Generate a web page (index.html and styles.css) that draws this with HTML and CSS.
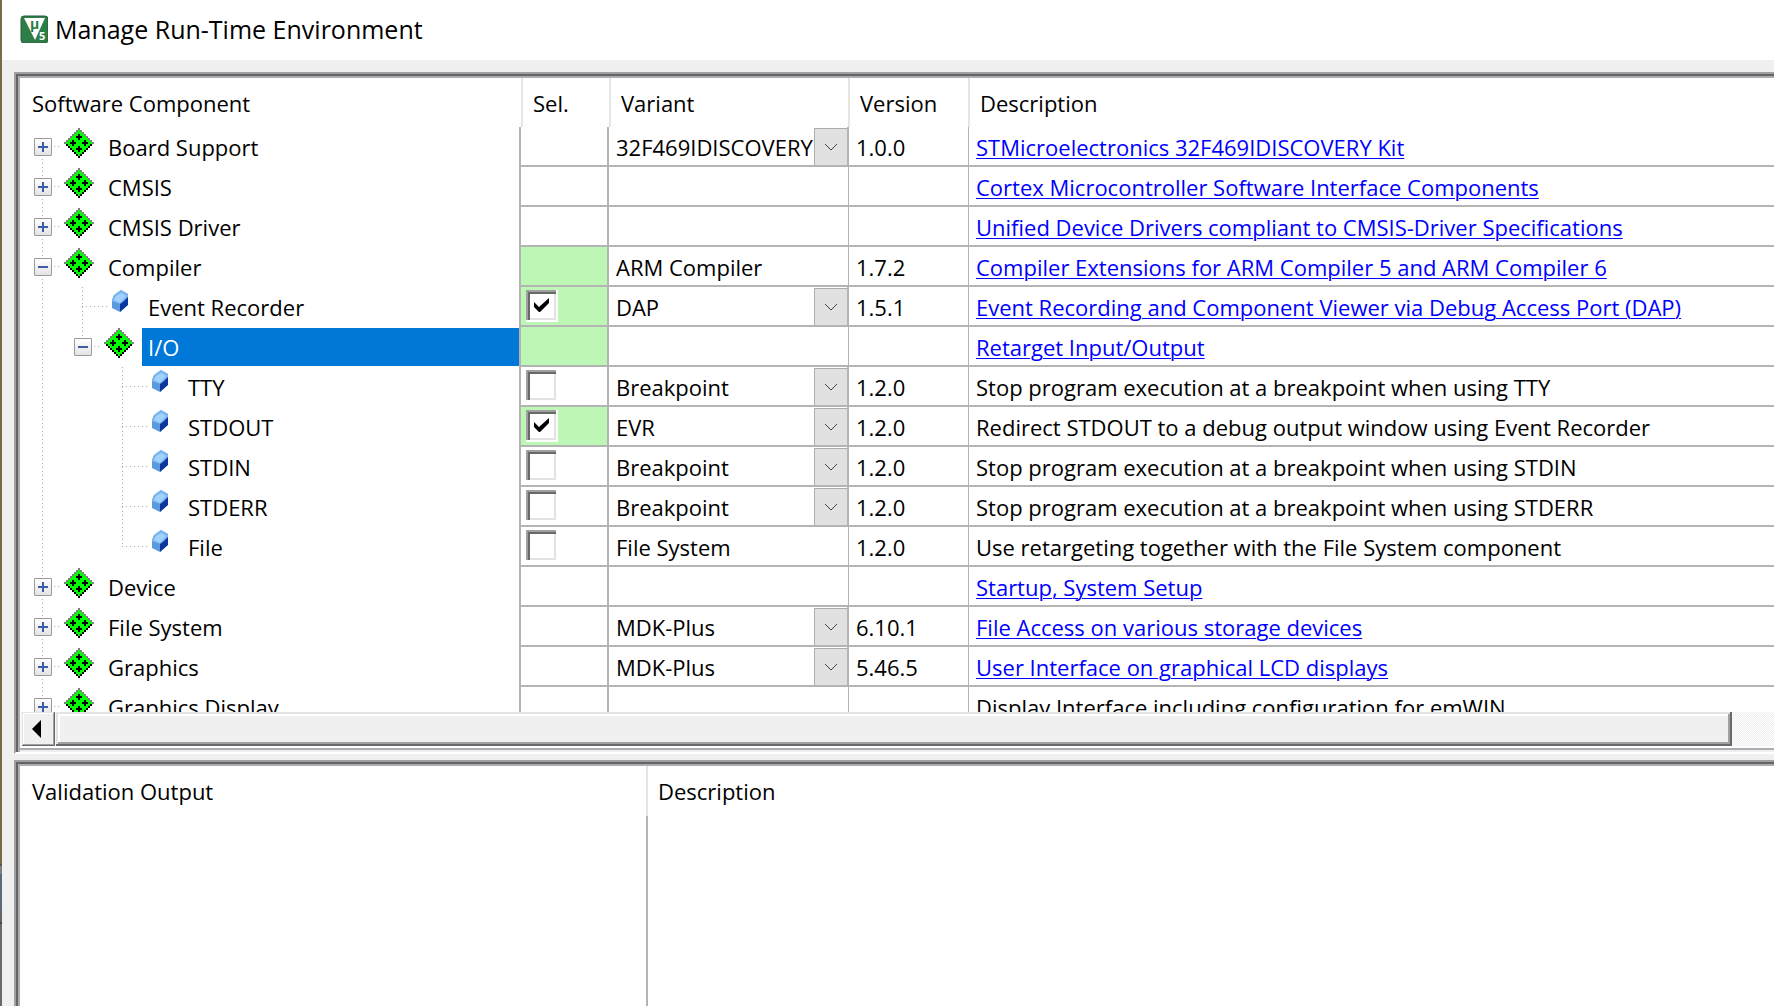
FILE: index.html
```html
<!DOCTYPE html>
<html lang="en">
<head>
  <meta charset="UTF-8" />
  <title>Manage Run-Time Environment</title>
  <link rel="stylesheet" href="styles.css">
</head>
<body>
  <!-- icons used by the tree -->
  <svg class="defs" aria-hidden="true">
    <symbol id="group" viewBox="0 0 15 15">
      <path stroke="#808080" d="M7 .5h1M6 1.5h3M5 2.5h5M4 3.5h7M3 4.5h9M2 5.5h11M1 6.5h13M0 7.5h15" />
      <path stroke="#000" d="M1 8.5h13M2 9.5h11M3 10.5h9M4 11.5h7M5 12.5h5M6 13.5h3M7 14.5h1" />
      <path stroke="#0f0" d="M7 1.5h1M6 2.5h3M5 3.5h5M4 4.5h7M3 5.5h9M2 6.5h11M1 7.5h13M2 8.5h11M3 9.5h9M4 10.5h7M5 11.5h5M6 12.5h3M7 13.5h1" />
      <path stroke="#000" d="M6 4.5h3M7.5 3v3M3 7.5h3M4.5 6v3M9 7.5h3M10.5 6v3M6 10.5h3M7.5 9v3" />
    </symbol>
    <symbol id="component" viewBox="0 0 16 22">
      <path fill="#5b9ade" d="M9 0L2 5L0 10V18L8 22L16 14V4Z" />
      <path fill="#7fb6f0" d="M9 0L16 4V7L8 14L0 11L2 5Z" />
      <path fill="#a3d0fc" d="M9 3L14 6L8 13L2 10L4 6Z" />
      <path fill="#0a37a0" d="M16 7V15L8 22V14L11 12Z" />
    </symbol>
  </svg>

  <div class="window">
    <header class="titlebar">
      <svg class="logo" viewBox="0 0 28 28" aria-hidden="true">
        <rect x="1" y="1" width="27" height="27" rx="3" fill="#2e7d46" stroke="#24603a" />
        <path fill="#fff" d="M4 3H25L15 25Z" />
        <text x="10" y="14" class="logo-mu">µ</text>
        <text x="19" y="25" class="logo-num">5</text>
      </svg>
      <h1>Manage Run-Time Environment</h1>
    </header>

    <main class="content">
      <section class="panel">
        <div class="list">
          <table class="components">
            <colgroup>
              <col class="col-name"><col class="col-sel"><col class="col-variant"><col class="col-version"><col>
            </colgroup>
            <thead>
              <tr><th>Software Component</th><th>Sel.</th><th>Variant</th><th>Version</th><th>Description</th></tr>
            </thead>
            <tbody>
              <tr>
                <td><div class="node"><span class="branch first"><button class="toggle" aria-expanded="false" aria-label="Board Support"></button></span><span class="icon"><svg class="group"><use href="#group" /></svg></span><span class="label">Board Support</span></div></td>
                <td></td>
                <td class="pick"><select aria-label="Board Support variant"><option>32F469IDISCOVERY</option></select></td>
                <td>1.0.0</td>
                <td><a href="#">STMicroelectronics 32F469IDISCOVERY Kit</a></td>
              </tr>
              <tr>
                <td><div class="node"><span class="branch"><button class="toggle" aria-expanded="false" aria-label="CMSIS"></button></span><span class="icon"><svg class="group"><use href="#group" /></svg></span><span class="label">CMSIS</span></div></td>
                <td></td>
                <td></td>
                <td></td>
                <td><a href="#">Cortex Microcontroller Software Interface Components</a></td>
              </tr>
              <tr>
                <td><div class="node"><span class="branch"><button class="toggle" aria-expanded="false" aria-label="CMSIS Driver"></button></span><span class="icon"><svg class="group"><use href="#group" /></svg></span><span class="label">CMSIS Driver</span></div></td>
                <td></td>
                <td></td>
                <td></td>
                <td><a href="#">Unified Device Drivers compliant to CMSIS-Driver Specifications</a></td>
              </tr>
              <tr>
                <td><div class="node"><span class="branch"><button class="toggle" aria-expanded="true" aria-label="Compiler"></button></span><span class="icon"><svg class="group"><use href="#group" /></svg></span><span class="label">Compiler</span></div></td>
                <td class="used"></td>
                <td>ARM Compiler</td>
                <td>1.7.2</td>
                <td><a href="#">Compiler Extensions for ARM Compiler 5 and ARM Compiler 6</a></td>
              </tr>
              <tr>
                <td><div class="node"><span class="line"></span><span class="branch"></span><span class="icon leaf"><svg class="component"><use href="#component" /></svg></span><label class="label" for="sel-er">Event Recorder</label></div></td>
                <td class="used"><input type="checkbox" id="sel-er" checked></td>
                <td class="pick"><select aria-label="Event Recorder variant"><option>DAP</option></select></td>
                <td>1.5.1</td>
                <td><a href="#">Event Recording and Component Viewer via Debug Access Port (DAP)</a></td>
              </tr>
              <tr class="selected">
                <td><div class="node"><span class="line"></span><span class="branch last"><button class="toggle" aria-expanded="true" aria-label="I/O"></button></span><span class="icon"><svg class="group"><use href="#group" /></svg></span><span class="label">I/O</span></div></td>
                <td class="used"></td>
                <td></td>
                <td></td>
                <td><a href="#">Retarget Input/Output</a></td>
              </tr>
              <tr>
                <td><div class="node"><span class="line"></span><span class="blank"></span><span class="branch"></span><span class="icon leaf"><svg class="component"><use href="#component" /></svg></span><label class="label" for="sel-tty">TTY</label></div></td>
                <td><input type="checkbox" id="sel-tty"></td>
                <td class="pick"><select aria-label="TTY variant"><option>Breakpoint</option></select></td>
                <td>1.2.0</td>
                <td>Stop program execution at a breakpoint when using TTY</td>
              </tr>
              <tr>
                <td><div class="node"><span class="line"></span><span class="blank"></span><span class="branch"></span><span class="icon leaf"><svg class="component"><use href="#component" /></svg></span><label class="label" for="sel-stdout">STDOUT</label></div></td>
                <td class="used"><input type="checkbox" id="sel-stdout" checked></td>
                <td class="pick"><select aria-label="STDOUT variant"><option>EVR</option></select></td>
                <td>1.2.0</td>
                <td>Redirect STDOUT to a debug output window using Event Recorder</td>
              </tr>
              <tr>
                <td><div class="node"><span class="line"></span><span class="blank"></span><span class="branch"></span><span class="icon leaf"><svg class="component"><use href="#component" /></svg></span><label class="label" for="sel-stdin">STDIN</label></div></td>
                <td><input type="checkbox" id="sel-stdin"></td>
                <td class="pick"><select aria-label="STDIN variant"><option>Breakpoint</option></select></td>
                <td>1.2.0</td>
                <td>Stop program execution at a breakpoint when using STDIN</td>
              </tr>
              <tr>
                <td><div class="node"><span class="line"></span><span class="blank"></span><span class="branch"></span><span class="icon leaf"><svg class="component"><use href="#component" /></svg></span><label class="label" for="sel-stderr">STDERR</label></div></td>
                <td><input type="checkbox" id="sel-stderr"></td>
                <td class="pick"><select aria-label="STDERR variant"><option>Breakpoint</option></select></td>
                <td>1.2.0</td>
                <td>Stop program execution at a breakpoint when using STDERR</td>
              </tr>
              <tr>
                <td><div class="node"><span class="line"></span><span class="blank"></span><span class="branch last"></span><span class="icon leaf"><svg class="component"><use href="#component" /></svg></span><label class="label" for="sel-file">File</label></div></td>
                <td><input type="checkbox" id="sel-file"></td>
                <td>File System</td>
                <td>1.2.0</td>
                <td>Use retargeting together with the File System component</td>
              </tr>
              <tr>
                <td><div class="node"><span class="branch"><button class="toggle" aria-expanded="false" aria-label="Device"></button></span><span class="icon"><svg class="group"><use href="#group" /></svg></span><span class="label">Device</span></div></td>
                <td></td>
                <td></td>
                <td></td>
                <td><a href="#">Startup, System Setup</a></td>
              </tr>
              <tr>
                <td><div class="node"><span class="branch"><button class="toggle" aria-expanded="false" aria-label="File System"></button></span><span class="icon"><svg class="group"><use href="#group" /></svg></span><span class="label">File System</span></div></td>
                <td></td>
                <td class="pick"><select aria-label="File System variant"><option>MDK-Plus</option></select></td>
                <td>6.10.1</td>
                <td><a href="#">File Access on various storage devices</a></td>
              </tr>
              <tr>
                <td><div class="node"><span class="branch"><button class="toggle" aria-expanded="false" aria-label="Graphics"></button></span><span class="icon"><svg class="group"><use href="#group" /></svg></span><span class="label">Graphics</span></div></td>
                <td></td>
                <td class="pick"><select aria-label="Graphics variant"><option>MDK-Plus</option></select></td>
                <td>5.46.5</td>
                <td><a href="#">User Interface on graphical LCD displays</a></td>
              </tr>
              <tr>
                <td><div class="node"><span class="branch"><button class="toggle" aria-expanded="false" aria-label="Graphics Display"></button></span><span class="icon"><svg class="group"><use href="#group" /></svg></span><span class="label">Graphics Display</span></div></td>
                <td></td>
                <td></td>
                <td></td>
                <td>Display Interface including configuration for emWIN</td>
              </tr>
            </tbody>
          </table>
        </div>
        <div class="scrollbar">
          <button class="scroll-left" aria-label="Scroll left"><svg viewBox="0 0 9 18"><path d="M9 0V18L0 9Z" /></svg></button>
          <div class="thumb"></div>
        </div>
      </section>

      <section class="panel output">
        <table class="validation">
          <colgroup><col class="col-output"><col></colgroup>
          <thead>
            <tr><th>Validation Output</th><th>Description</th></tr>
          </thead>
          <tbody>
            <tr><td></td><td></td></tr>
          </tbody>
        </table>
      </section>
    </main>
  </div>
</body>
</html>
```
FILE: styles.css
```css
* {
  box-sizing: border-box;
}
body {
  margin: 0;
  font-family: "Open Sans", "Noto Sans", sans-serif;
  font-size: 22px;
  color: #000;
  overflow: hidden;
  /* desktop showing at the left of the window */
  background: linear-gradient(#7b6a48 0 864px, #555 864px 866px, #7d7f86 866px 874px, #5c6a78 874px 910px, #666 910px 922px, #444 922px 924px, #6a6a6a 924px);
}
.defs {
  display: none;
}
.window {
  display: flex;
  flex-direction: column;
  height: 100vh;
  margin-left: 2px;
  background-color: #f0f0f0;
}

/* title bar */
.titlebar {
  display: flex;
  align-items: center;
  gap: 7px;
  height: 60px;
  padding: 0 0 2px 18px;
  background-color: #fff;
}
.titlebar h1 {
  margin: 0;
  font-size: 25px;
  font-weight: normal;
}
.logo {
  width: 28px;
  height: 28px;
}
.logo-mu {
  font-size: 14px;
  font-weight: bold;
  fill: #2e7d46;
}
.logo-num {
  font-size: 11px;
  font-weight: bold;
  fill: #fff;
}

/* panels */
.content {
  display: flex;
  flex-direction: column;
  flex: 1;
  gap: 6px;
  min-height: 0;
  padding: 12px 0 0 12px;
}
.panel {
  border-top: 2px solid #a0a0a0;
  border-left: 2px solid #a0a0a0;
  border-bottom: 2px solid #fff;
  box-shadow: inset 2px 2px #646464, inset 4px 4px #abadb3, inset 0 -2px #efefef, inset 0 -4px #abadb3;
  padding: 4px 0 6px 4px;
  background-color: #fff;
}
.list {
  height: 634px;
  overflow: hidden;
}
.output {
  display: grid;
  flex: 1;
  border-bottom: 0;
  box-shadow: inset 2px 2px #646464, inset 4px 4px #abadb3;
  padding-bottom: 0;
}

/* tables */
table {
  width: 100%;
  table-layout: fixed;
  border-collapse: separate;
  border-spacing: 0;
}
th {
  height: 49px;
  padding: 0 10px;
  font-weight: normal;
  text-align: left;
  border-left: 2px solid #e5e5e5;
}
th:first-child {
  padding-left: 12px;
  border-left: 0;
}
.col-name {
  width: 501px;
}
.col-sel {
  width: 88px;
}
.col-variant {
  width: 239px;
}
.col-version {
  width: 120px;
}
.components td {
  height: 40px;
  padding: 2px 7px 0;
  line-height: 36px;
  white-space: nowrap;
  border-bottom: 2px solid #b4b4b4;
  border-left: 1px solid #b4b4b4;
}
.components td:nth-child(-n+3) {
  border-left: 0;
}
.components td:nth-child(-n+2) {
  border-right: 2px solid #b4b4b4;
}
.components td:first-child {
  padding: 0 0 0 2px;
  border-bottom: 0;
}
.components td:nth-child(2) {
  padding: 3px 0 0 5px;
  line-height: 0;
  vertical-align: top;
}
.components td.used {
  background-color: #bdf7b5;
}
.components td.pick {
  padding: 1px 0 0;
  border-right: 1px solid #b4b4b4;
}
a {
  color: #00f;
  text-decoration-thickness: 1px;
  text-underline-offset: 2px;
}

/* tree */
.node {
  display: flex;
  height: 40px;
}
.line,
.blank,
.branch,
.icon {
  flex: 0 0 40px;
}
.line,
.branch {
  background-repeat: no-repeat;
  background-image: repeating-linear-gradient(#aaa 0 1px, transparent 1px 4px), repeating-linear-gradient(90deg, #aaa 0 1px, transparent 1px 4px);
  background-position: 20px 0, 20px 19px;
  background-size: 1px 40px, 20px 1px;
}
.line {
  background-size: 1px 40px, 0 0;
}
.branch {
  display: flex;
  align-items: center;
  justify-content: center;
  padding-left: 2px;
}
.branch.first {
  background-position: 20px 20px, 20px 19px;
}
.branch.last {
  background-size: 1px 20px, 20px 1px;
}
.toggle {
  display: grid;
  place-items: center;
  width: 18px;
  height: 18px;
  padding: 0;
  border: 1px solid #999;
  border-radius: 1px;
  background: linear-gradient(#fff, #e4e4e4);
}
.toggle::before,
.toggle[aria-expanded="false"]::after {
  content: "";
  grid-area: 1 / 1;
  width: 10px;
  height: 2px;
  background-color: #3f5ca8;
}
.toggle[aria-expanded="false"]::after {
  width: 2px;
  height: 10px;
}
.icon {
  padding: 1px 0 0 2px;
  line-height: 0;
}
.icon.leaf {
  padding: 3px 0 0 10px;
  background: repeating-linear-gradient(90deg, #aaa 0 1px, transparent 1px 4px) 0 19px / 5px 1px no-repeat;
}
.group {
  width: 30px;
  height: 30px;
  shape-rendering: crispEdges;
}
.component {
  width: 16px;
  height: 22px;
}
.label {
  flex: 1;
  padding: 2px 6px 0;
}
.selected .label {
  margin: 1px 0;
  padding-top: 1px;
  background-color: #0078d7;
  color: #fff;
}

/* cell controls */
input[type="checkbox"] {
  appearance: none;
  width: 32px;
  height: 32px;
  margin: 0;
  padding: 8px;
  background-color: #fff;
  border-right: 2px solid #fff;
  border-bottom: 2px solid #fff;
  box-shadow: inset 2px 2px #a0a0a0, inset 4px 4px #696969, inset -2px -2px #e3e3e3;
}
input[type="checkbox"]:checked::before {
  content: "";
  display: block;
  width: 15px;
  height: 15px;
  background-color: #000;
  clip-path: polygon(0 4px, 5px 9px, 15px 0, 15px 5px, 6px 14px, 5px 14px, 0 9px);
}
select {
  appearance: none;
  display: block;
  width: 100%;
  height: 37px;
  padding: 1px 33px 0 7px;
  border: 0;
  border-radius: 0;
  font: inherit;
  color: inherit;
  background: url("data:image/svg+xml,%3Csvg xmlns='http://www.w3.org/2000/svg' width='33' height='37'%3E%3Cpath d='M0 0H33V37H0Z' fill='%23adadad'/%3E%3Cpath d='M1 1H33V37H1Z' fill='%23e1e1e1'/%3E%3Cpath d='M11 16L17 22L23 16' fill='none' stroke='%23444'/%3E%3C/svg%3E") right top no-repeat #fff;
}

/* horizontal scrollbar */
.scrollbar {
  display: flex;
  gap: 1px;
  height: 34px;
  padding: 0 42px 0 2px;
  background: repeating-conic-gradient(#efefef 0 25%, #fff 0 50%) 0 0 / 2px 2px;
}
.scroll-left {
  flex: 0 0 33px;
  padding: 0 2px 0 8px;
  border: 0;
  background-color: #f0f0f0;
  box-shadow: inset -1px -1px #696969, inset 1px 1px #e3e3e3, inset -2px -2px #a0a0a0, inset 2px 2px #fff;
}
.scroll-left svg {
  display: block;
  width: 9px;
  height: 18px;
  margin-left: 2px;
}
.thumb {
  flex: 1;
  background-color: #f0f0f0;
  box-shadow: inset -2px -2px #696969, inset 2px 2px #e3e3e3, inset -4px -4px #a0a0a0, inset 4px 4px #fff;
}

/* validation output */
.col-output {
  width: 626px;
}
.validation th {
  height: 50px;
}
.validation td {
  border-left: 2px solid #b4b4b4;
}
.validation td:first-child {
  border-left: 0;
}
.validation tbody tr {
  height: 100%;
}
```
